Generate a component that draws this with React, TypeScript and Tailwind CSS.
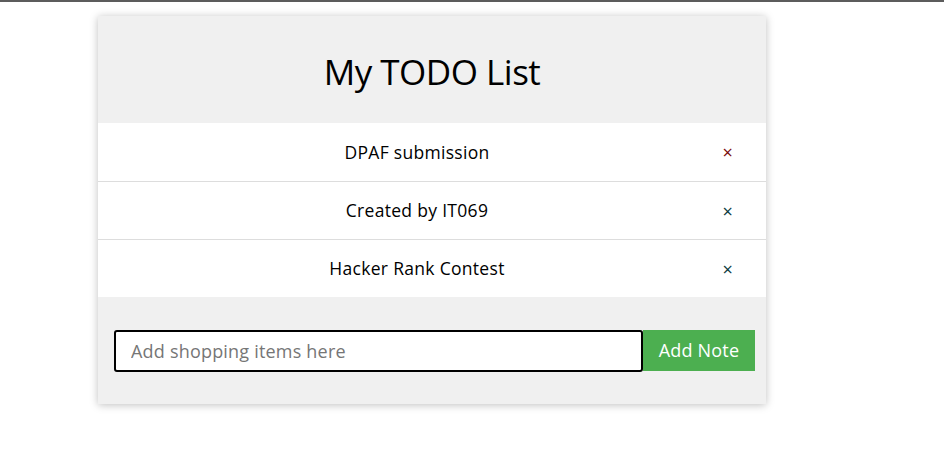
import React from 'react';

const items = [
  { text: 'DPAF submission', closeColor: 'text-[#7a0a0a]', h: 'h-[59px]' },
  { text: 'Created by IT069', closeColor: 'text-[#0a3a40]', h: 'h-[58px]' },
  { text: 'Hacker Rank Contest', closeColor: 'text-[#0a3a40]', h: 'h-[57px]' },
];

export default function App() {
  return (
    <div className="min-h-screen bg-white font-['Open_Sans',sans-serif]">
      <div className="h-[2px] bg-[#5c5c5c]" />

      <div className="ml-[98px] mt-[14px] w-[668px] shadow-[0_1px_8px_rgba(0,0,0,0.25)]">
        {/* Header */}
        <div className="h-[107px] bg-[#f0f0f0] flex items-center justify-center pt-[6px]">
          <h1 className="text-[35px] text-black font-normal tracking-[-0.5px]">My TODO List</h1>
        </div>

        {/* Items */}
        <ul>
          {items.map((item, i) => (
            <li
              key={item.text}
              className={`relative ${item.h} bg-white flex items-center justify-center pr-[30px] text-[17.5px] text-black tracking-[0.3px] ${
                i < items.length - 1 ? 'border-b border-[#dddddd]' : ''
              }`}
            >
              {item.text}
              <span className={`absolute right-[33px] top-1/2 -translate-y-1/2 text-[18px] ${item.closeColor}`}>
                ×
              </span>
            </li>
          ))}
        </ul>

        {/* Input */}
        <div className="h-[107px] bg-[#f0f0f0] flex items-center pl-[16px] pr-[11px]">
          <input
            type="text"
            placeholder="Add shopping items here"
            className="w-[529px] h-[42px] bg-white border-2 border-black rounded-[3px] px-[15px] text-[18px] tracking-[0.2px] text-black placeholder:text-[#767676] outline-none"
          />
          <button className="w-[112px] h-[41px] bg-[#4caf50] text-white text-[18px] tracking-[0.2px]">Add Note</button>
        </div>
      </div>
    </div>
  );
}
